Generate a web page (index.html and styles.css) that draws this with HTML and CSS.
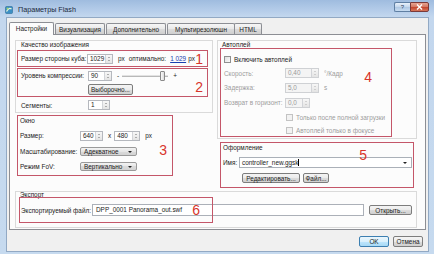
FILE: index.html
```html
<!DOCTYPE html>
<html lang="ru">
<head>
<meta charset="utf-8">
<title>Параметры Flash</title>
<link rel="stylesheet" href="styles.css">
</head>
<body>
<div class="frame">
  <div class="titlebar">
    <svg class="appicon" width="8" height="8" viewBox="0 0 8 8">
      <rect x="0.5" y="0.5" width="7" height="7" rx="1" fill="#3c8fc4" stroke="#2a6d99" stroke-width="0.6"/>
      <path d="M1.5 5.5 Q4 1 6.5 3" stroke="#e6f4d8" stroke-width="1.2" fill="none"/>
      <circle cx="2.5" cy="2.5" r="1" fill="#9bd36a"/>
    </svg>
    <span class="ttext">Параметры Flash</span>
    <div class="capbtn help">?</div>
    <div class="capbtn close">
      <svg width="7" height="6" viewBox="0 0 7 6"><path d="M1 0.5 L6 5.5 M6 0.5 L1 5.5" stroke="#fff" stroke-width="1.4"/></svg>
    </div>
  </div>
  <div class="client">
    <div class="tabs">
      <div class="tab active t1">Настройки</div>
      <div class="tab t2">Визуализация</div>
      <div class="tab t3">Дополнительно</div>
      <div class="tab t4">Мультирезолюшн</div>
      <div class="tab t5">HTML</div>
    </div>
    <div class="panel">
      <div class="cols">
        <div class="col-left">
          <div class="gbox quality">
            <div class="gtitle">Качество изображения</div>
            <div class="rbox r1">
              <span class="lbl lw66">Размер стороны куба:</span>
              <div class="spin w26"><span class="v">1029</span><span class="arr"><i class="up"></i><i class="dn"></i></span></div>
              <span class="ml5">px</span>
              <span class="ml4">оптимально:</span>
              <a class="link">1 029</a>
              <span class="ml2">px</span>
              <span class="num n1">1</span>
            </div>
            <div class="rbox r2">
              <div class="row r2a">
                <span class="lbl lw67">Уровень компрессии:</span>
                <div class="spin w24"><span class="v">90</span><span class="arr"><i class="up"></i><i class="dn"></i></span></div>
                <span class="ml5">-</span>
                <div class="slider"><div class="track"></div><div class="thumb"></div></div>
                <span class="ml5">+</span>
              </div>
              <div class="row r2b"><div class="btn sel">Выборочно...</div></div>
              <span class="num n2">2</span>
            </div>
            <div class="row seg">
              <span class="lbl lw67">Сегменты:</span>
              <div class="spin w22"><span class="v">1</span><span class="arr"><i class="up"></i><i class="dn"></i></span></div>
            </div>
          </div>
          <div class="rbox r3">
            <div class="gtitle2">Окно</div>
            <div class="row r3a">
              <span class="lbl lw60">Размер:</span>
              <div class="spin w23"><span class="v">640</span><span class="arr"><i class="up"></i><i class="dn"></i></span></div>
              <span class="ml5">x</span>
              <div class="spin w26 ml3"><span class="v">480</span><span class="arr"><i class="up"></i><i class="dn"></i></span></div>
              <span class="ml5">px</span>
            </div>
            <div class="row r3b">
              <span class="lbl lw60">Масштабирование:</span>
              <div class="combo w57"><span class="v">Адекватное</span><i class="dd"></i></div>
            </div>
            <div class="row r3c">
              <span class="lbl lw60">Режим FoV:</span>
              <div class="combo w57"><span class="v">Вертикально</span><i class="dd"></i></div>
            </div>
            <span class="num n3">3</span>
          </div>
        </div>
        <div class="col-right">
          <div class="gbox autoplay">
            <div class="gtitle gt7">Автоплей</div>
            <div class="rbox r4">
              <div class="row a1"><span class="chk"></span><span class="ml3">Включить автоплей</span></div>
              <div class="row a2 dis">
                <span class="lbl lw61">Скорость:</span>
                <div class="spin w34 dspin"><span class="v">0,40</span><span class="arr"><i class="up"></i><i class="dn"></i></span></div>
                <span class="ml5">°/Кадр</span>
              </div>
              <div class="row a3 dis">
                <span class="lbl lw61">Задержка:</span>
                <div class="spin w34 dspin"><span class="v">5,0</span><span class="arr"><i class="up"></i><i class="dn"></i></span></div>
                <span class="ml5">s</span>
              </div>
              <div class="row a4 dis">
                <span class="lbl lw61">Возврат в горизонт:</span>
                <div class="spin w25 dspin"><span class="v">0,0</span><span class="arr"><i class="up"></i><i class="dn"></i></span></div>
              </div>
              <div class="row a5 dis ind"><span class="chk dchk"></span><span class="ml3">Только после полной загрузки</span></div>
              <div class="row a6 dis ind"><span class="chk dchk"></span><span class="ml3">Автоплей только в фокусе</span></div>
              <span class="num n4">4</span>
            </div>
          </div>
          <div class="rbox r5">
            <div class="gtitle2">Оформление</div>
            <div class="row r5a">
              <span class="lbl lw16">Имя:</span>
              <div class="combo edit w173"><span class="v">controller_new.ggsk<span class="caret"></span></span><i class="dd"></i></div>
            </div>
            <div class="row r5b">
              <div class="btn edb">Редактировать...</div>
              <div class="btn fb">Файл...</div>
            </div>
            <span class="num n5">5</span>
          </div>
        </div>
      </div>
      <div class="gbox export">
        <div class="gtitle gt5">Экспорт</div>
        <div class="row ex">
          <span class="lbl lw71">Экспортируемый файл:</span>
          <div class="input w272">DPP_0001 Panorama_out.swf</div>
          <div class="btn ob">Открыть...</div>
        </div>
        <div class="rbox r6"><span class="num n6">6</span></div>
      </div>
    </div>
    <div class="bottom">
      <div class="btn ok">OK</div>
      <div class="btn cancel">Отмена</div>
    </div>
  </div>
</div>
</body>
</html>
```
FILE: styles.css
```css
* { box-sizing: border-box; margin: 0; padding: 0; }
html, body { width: 434px; height: 254px; overflow: hidden; }
body {
  font-family: "Liberation Sans", Arial, sans-serif;
  font-size: 6.4px;
  color: #222;
  background: #b9d0ea;
}
.frame {
  width: 434px; height: 254px;
  display: flex; flex-direction: column;
  padding: 0 5px 2px 6px;
  background: linear-gradient(180deg, #9fbcdf 0px, #b4cce9 10px, #c3d7ee 17px, #c6daef 100%);
}
.titlebar { height: 17px; display: flex; align-items: center; position: relative; }
.appicon { margin-left: -1px; margin-top: 2px; }
.ttext { margin-left: 5px; margin-top: 2px; font-size: 7.2px; color: #1b2a3c; }
.capbtn {
  height: 10px; display: flex; align-items: center; justify-content: center;
  border: 1px solid #5f7fa3; border-radius: 2px; margin-top: -3px;
}
.help {
  margin-left: auto; width: 16px; font-size: 6px; color: #2a3f5a;
  background: linear-gradient(#e8f1fb, #c3d6ec 50%, #aec7e3 50%, #c8dcf1);
  border-right: none; border-radius: 2px 0 0 2px;
}
.close {
  width: 19px; border-color: #7a3a3a; border-radius: 0 2px 2px 0;
  background: linear-gradient(#e8a593, #d27560 50%, #c2412a 50%, #d5765c);
}
.client {
  flex: 1; background: #f0f0f0;
  border: 1px solid #92a9c4;
  display: flex; flex-direction: column;
  padding: 0 1px 0 2px;
}
.tabs { display: flex; align-items: flex-end; height: 16px; margin-top: 0; position: relative; z-index: 2; }
.tab {
  height: 11px; border: 1px solid #8c8e94; border-bottom: none;
  background: linear-gradient(#f6f6f6, #e8e8e8 50%, #dcdcdc 50%, #cfcfcf);
  display: flex; align-items: center; justify-content: center;
  color: #222; border-radius: 2px 2px 0 0;
}
.tab.active { height: 13px; background: #fcfcfc; margin-bottom: -1px; padding-bottom: 1px; }
.t1 { width: 45px; }
.t2 { width: 50px; margin-left: 1px; }
.t3 { width: 60px; margin-left: 1px; }
.t4 { width: 68px; margin-left: 1px; }
.t5 { width: 28px; margin-left: -1px; }
.panel {
  height: 196px; background: #fcfcfc; border: 1px solid #8c8e94;
  margin-right: 1px;
  padding: 5px 0 0 5px;
  position: relative; z-index: 1;
}
.cols { display: flex; gap: 4px; height: 151px; }
.col-left { width: 198px; display: flex; flex-direction: column; }
.col-right { width: 200px; display: flex; flex-direction: column; }
.gbox { border: 1px solid #dadada; position: relative; }
.quality { height: 73px; padding: 0 0 0 1px; }
.gtitle { height: 9px; line-height: 7px; padding-left: 4px; }
.gt7 { height: 7px; }
.gt5 { height: 5px; line-height: 6px; }
.gtitle2 { height: 8px; line-height: 8px; }
.rbox { border: 1px solid #c45669; position: relative; }
.num {
  position: absolute; color: #d8352c; font-size: 14px; line-height: 14px;
  font-family: "Liberation Sans", Arial, sans-serif;
}
.row { display: flex; align-items: center; white-space: nowrap; }
.lbl { flex: none; white-space: nowrap; }
.lw16 { width: 16px; } .lw60 { width: 60px; } .lw61 { width: 61px; }
.lw66 { width: 66px; } .lw67 { width: 67px; } .lw71 { width: 71px; }
.ml2 { margin-left: 2px; } .ml3 { margin-left: 3px; } .ml4 { margin-left: 4px; } .ml5 { margin-left: 5px; }
.r1 { width: 191px; height: 17px; display: flex; align-items: center; padding-left: 3px; white-space: nowrap; }
.link { margin-left: 4px; color: #1a3fb0; text-decoration: underline; }
.n1 { right: 4px; top: 1px; }
.r2 { width: 191px; height: 29px; margin-top: 1px; padding-left: 3px; }
.r2a { height: 11px; margin-top: 1px; }
.r2b { height: 11px; margin-top: 3px; }
.n2 { right: 4px; top: 11px; }
.seg { height: 12px; margin-top: 2px; padding-left: 4px; }
.spin {
  height: 10px; display: flex; border: 1px solid #b5b8be; background: #fff; flex: none;
}
.spin .v { flex: 1; padding-left: 2px; line-height: 8px; }
.spin .arr {
  width: 7px; border-left: 1px solid #d2d4d8; background: linear-gradient(#f7f7f7, #e4e4e4);
  display: flex; flex-direction: column; align-items: center; justify-content: space-around; padding: 1px 0;
}
.spin .arr i { width: 0; height: 0; border-left: 1.5px solid transparent; border-right: 1.5px solid transparent; }
.spin .arr .up { border-bottom: 1.5px solid #6a6a6a; }
.spin .arr .dn { border-top: 1.5px solid #6a6a6a; }
.w22 { width: 22px; } .w23 { width: 23px; } .w24 { width: 24px; } .w25 { width: 25px; }
.w26 { width: 26px; } .w34 { width: 34px; } .w57 { width: 57px; } .w173 { width: 173px; } .w272 { width: 272px; }
.dspin { border-color: #cfd1d4; }
.dspin .v { color: #9a9a9a; background: #f4f4f4; }
.dspin .arr i.up { border-bottom-color: #b0b0b0; }
.dspin .arr i.dn { border-top-color: #b0b0b0; }
.slider { position: relative; width: 46px; height: 10px; margin-left: 3px; }
.slider .track { position: absolute; left: 0; right: 0; top: 4px; height: 2px; background: #e2e2e2; border: 1px solid #b8b8b8; border-width: 0 0 1px 0; }
.slider .thumb {
  position: absolute; left: 38px; top: 0; width: 5px; height: 10px;
  border: 1px solid #8a8a8a; border-radius: 1px; background: linear-gradient(90deg, #fafafa, #dcdcdc);
}
.btn {
  height: 11px; border: 1px solid #7d7d7d; border-radius: 2px;
  background: linear-gradient(#f4f4f4, #ebebeb 50%, #dddddd 50%, #cfcfcf);
  display: flex; align-items: center; justify-content: center; white-space: nowrap; flex: none;
}
.sel { width: 45px; margin-left: 67px; }
.r3 { width: 156px; height: 61px; margin: 2px 0 0 2px; padding: 1px 0 0 2px; }
.r3a { height: 11px; margin-top: 5px; }
.r3b { height: 11px; margin-top: 5px; }
.r3c { height: 11px; margin-top: 4px; }
.n3 { right: 5px; top: 27px; }
.combo {
  height: 9px; display: flex; align-items: center; border: 1px solid #9a9a9a; border-radius: 2px;
  background: linear-gradient(#f3f3f3, #e6e6e6 50%, #dadada 50%, #d3d3d3); flex: none; padding-left: 3px;
}
.combo .v { flex: 1; }
.combo .dd {
  width: 0; height: 0; margin-right: 4px;
  border-left: 2px solid transparent; border-right: 2px solid transparent; border-top: 2px solid #222;
}
.combo.edit { height: 11px; background: #fff; border-color: #aab0b8; border-radius: 0; padding-left: 2px; }
.caret { display: inline-block; width: 1px; height: 7px; background: #000; vertical-align: -1px; }
.autoplay { height: 99px; }
.r4 { width: 172px; height: 89px; margin-left: 2px; padding: 3px 0 0 3px; }
.a1 { height: 14px; }
.a2 { height: 14px; }
.a3 { height: 15px; }
.a4 { height: 15px; }
.a5 { height: 15px; }
.a6 { height: 11px; }
.ind { padding-left: 62px; }
.dis { color: #9c9c9c; }
.chk {
  width: 7px; height: 7px; border: 1px solid #8f8f8f; flex: none;
  background: linear-gradient(135deg, #dedede, #fafafa);
}
.dchk { border-color: #c3c3c3; background: #f2f2f2; }
.n4 { right: 19px; top: 21px; }
.r5 { width: 194px; height: 46px; margin: 3px 0 0 3px; padding: 1px 0 0 2px; }
.r5a { height: 11px; margin-top: 5px; }
.r5b { height: 10px; margin-top: 5px; }
.edb { width: 58px; height: 10px; margin-left: 19px; }
.fb { width: 26px; height: 10px; margin-left: 3px; }
.n5 { right: 46px; top: 5px; }
.export { width: 402px; height: 37px; }
.export .gtitle { padding-left: 4px; }
.ex { height: 12px; margin-top: 7px; padding-left: 5px; }
.input { height: 12px; border: 1px solid #abb0b8; background: #fff; padding-left: 3px; line-height: 10px; flex: none; }
.ob { width: 43px; height: 10px; margin-left: 5px; }
.r6 { position: absolute; left: 3px; top: 5px; width: 194px; height: 26px; }
.n6 { right: 12px; top: 5px; }
.bottom { display: flex; justify-content: flex-end; gap: 4px; padding: 6px 4px 0 0; }
.ok {
  width: 30px; height: 11px; border-color: #3c7fb1;
  background: linear-gradient(#eaf6fd, #d9f0fc 50%, #bee6fd 50%, #a7d9f5);
}
.cancel { width: 30px; height: 11px; }
```
